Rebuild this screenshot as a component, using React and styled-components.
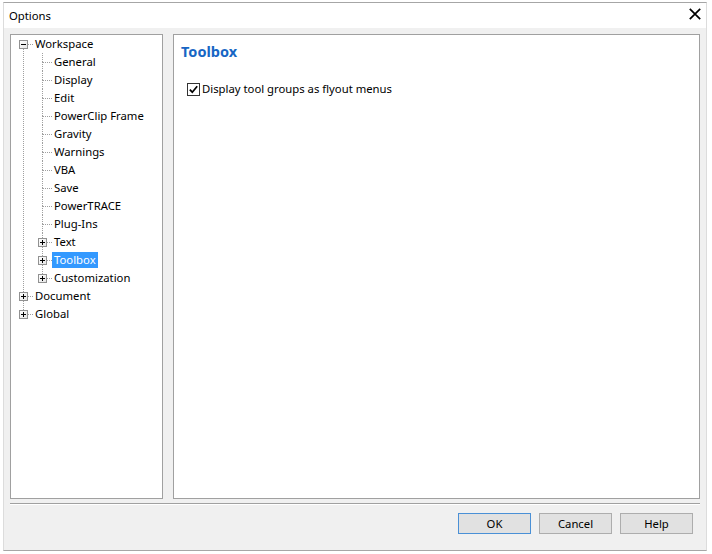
import React from 'react';
import styled, { createGlobalStyle } from 'styled-components';

const GlobalStyle = createGlobalStyle`
  html, body { margin: 0; padding: 0; background: #fff; }
  body {
    font-family: "Noto Sans", "Open Sans", sans-serif;
    font-size: 11.3px;
    color: #000;
  }
  #root { width: 712px; height: 554px; overflow: hidden; }
  * { box-sizing: border-box; }
`;

const Page = styled.div`
  width: 712px;
  height: 554px;
  padding: 2px 0 0 3px;
`;

const Window = styled.div`
  width: 704px;
  height: 549px;
  border: 1px solid #dcdcdc;
  border-top-color: #a6a6a6;
  border-bottom-color: #a6a6a6;
  display: flex;
  flex-direction: column;
  background: #fff;
`;

const TitleBar = styled.div`
  height: 25px;
  flex: none;
  display: flex;
  align-items: flex-start;
  justify-content: space-between;
  padding: 0 5px;
  background: #fff;
`;

const Title = styled.span`
  font-size: 11.3px;
  line-height: 16px;
  margin-top: 5px;
  color: #000;
`;

const CloseButton = styled.span`
  display: flex;
  width: 12px;
  height: 12px;
  margin-top: 5px;
`;

const Client = styled.div`
  flex: 1;
  background: #f0f0f0;
  display: flex;
  flex-direction: column;
  padding: 6px 6px 0;
`;

const Panels = styled.div`
  display: flex;
  gap: 10px;
  height: 465px;
  flex: none;
`;

const TreePanel = styled.div`
  width: 153px;
  flex: none;
  border: 1px solid #a0a0a0;
  background: #fff;
  padding: 0 0 0 3px;
`;

const ContentPanel = styled.div`
  flex: 1;
  border: 1px solid #a0a0a0;
  background: #fff;
  padding: 7px;
`;

const Separator = styled.div`
  margin-top: 4px;
  height: 2px;
  flex: none;
  border-top: 1px solid #a0a0a0;
  border-bottom: 1px solid #ffffff;
`;

const Footer = styled.div`
  display: flex;
  justify-content: flex-end;
  gap: 8px;
  padding: 8px 7px 0 0;
`;

const Button = styled.button`
  width: 73px;
  height: 21px;
  padding: 0;
  border: 1px solid ${(p) => (p.$primary ? '#4a90d6' : '#adadad')};
  background: #e1e1e1;
  font-family: "Noto Sans", "Open Sans", sans-serif;
  font-size: 11.3px;
  line-height: 17px;
  color: #000;
`;

const TreeList = styled.ul`
  list-style: none;
  margin: 0;
  padding: 0;
`;

const Row = styled.li`
  display: flex;
  align-items: center;
  height: 18px;
`;

const Label = styled.span`
  padding: 0 2px;
  height: 16px;
  line-height: 16px;
  white-space: nowrap;
  background: ${(p) => (p.$selected ? '#3399ff' : 'transparent')};
  color: ${(p) => (p.$selected ? '#fff' : '#000')};
`;

const PageTitle = styled.h2`
  margin: 0;
  font-size: 14.5px;
  line-height: 18px;
  font-weight: 700;
  color: #1766c4;
`;

const CheckRow = styled.label`
  display: flex;
  align-items: center;
  gap: 2px;
  height: 16px;
  margin: 21px 0 0 6px;
  line-height: 16px;
`;

const CheckBox = styled.span`
  width: 13px;
  height: 13px;
  flex: none;
  border: 1px solid #333;
  background: #fff;
  display: flex;
  align-items: center;
  justify-content: center;
`;

const DOT = { stroke: '#a0a0a0', strokeWidth: 1, strokeDasharray: '1 1' };

function Connector({ up, down, across, expander }) {
  const hasBox = !!expander;
  return (
    <svg width="19" height="18" viewBox="0 0 19 18" style={{ flex: 'none', display: 'block' }}>
      {up && <line x1="9.5" y1="0" x2="9.5" y2={hasBox ? 5 : 10} {...DOT} />}
      {down && <line x1="9.5" y1={hasBox ? 14 : 9} x2="9.5" y2="18" {...DOT} />}
      {across && <line x1={hasBox ? 14 : 10} y1="9.5" x2="19" y2="9.5" {...DOT} />}
      {hasBox && (
        <g>
          <defs>
            <linearGradient id="exg" x1="0" y1="0" x2="1" y2="1">
              <stop offset="0" stopColor="#ffffff" />
              <stop offset="1" stopColor="#e4e4e4" />
            </linearGradient>
          </defs>
          <rect x="5.5" y="5.5" width="8" height="8" fill="url(#exg)" stroke="#919191" />
          <line x1="7" y1="9.5" x2="12" y2="9.5" stroke="#000" />
          {expander === 'plus' && <line x1="9.5" y1="7" x2="9.5" y2="12" stroke="#000" />}
        </g>
      )}
    </svg>
  );
}

function Guide({ on }) {
  return (
    <svg width="19" height="18" viewBox="0 0 19 18" style={{ flex: 'none', display: 'block' }}>
      {on && <line x1="9.5" y1="0" x2="9.5" y2="18" {...DOT} />}
    </svg>
  );
}

const children = [
  'General', 'Display', 'Edit', 'PowerClip Frame', 'Gravity', 'Warnings',
  'VBA', 'Save', 'PowerTRACE', 'Plug-Ins',
];

const rows = [
  { label: 'Workspace', guides: [], up: false, down: true, expander: 'minus' },
  ...children.map((label) => ({ label, guides: [true], up: true, down: true })),
  { label: 'Text', guides: [true], up: true, down: true, expander: 'plus' },
  { label: 'Toolbox', guides: [true], up: true, down: true, expander: 'plus', selected: true },
  { label: 'Customization', guides: [true], up: true, down: false, expander: 'plus' },
  { label: 'Document', guides: [], up: true, down: true, expander: 'plus' },
  { label: 'Global', guides: [], up: true, down: false, expander: 'plus' },
];

export default function App() {
  return (
    <>
      <GlobalStyle />
      <Page>
        <Window>
          <TitleBar>
            <Title>Options</Title>
            <CloseButton>
              <svg width="12" height="12" viewBox="0 0 12 12">
                <path d="M0.8 0.8 L11.2 11.2 M11.2 0.8 L0.8 11.2" stroke="#000" strokeWidth="1.7" fill="none" />
              </svg>
            </CloseButton>
          </TitleBar>
          <Client>
            <Panels>
              <TreePanel>
                <TreeList>
                  {rows.map((r) => (
                    <Row key={r.label}>
                      {r.guides.map((g, i) => (
                        <Guide key={i} on={g} />
                      ))}
                      <Connector up={r.up} down={r.down} across expander={r.expander} />
                      <Label $selected={r.selected}>{r.label}</Label>
                    </Row>
                  ))}
                </TreeList>
              </TreePanel>
              <ContentPanel>
                <PageTitle>Toolbox</PageTitle>
                <CheckRow>
                  <CheckBox>
                    <svg width="11" height="11" viewBox="0 0 11 11">
                      <path d="M1.8 5.6 L4.3 8.2 L9.2 2.2" stroke="#000" strokeWidth="1.7" fill="none" />
                    </svg>
                  </CheckBox>
                  <span>Display tool groups as flyout menus</span>
                </CheckRow>
              </ContentPanel>
            </Panels>
            <Separator />
            <Footer>
              <Button $primary>OK</Button>
              <Button>Cancel</Button>
              <Button>Help</Button>
            </Footer>
          </Client>
        </Window>
      </Page>
    </>
  );
}
